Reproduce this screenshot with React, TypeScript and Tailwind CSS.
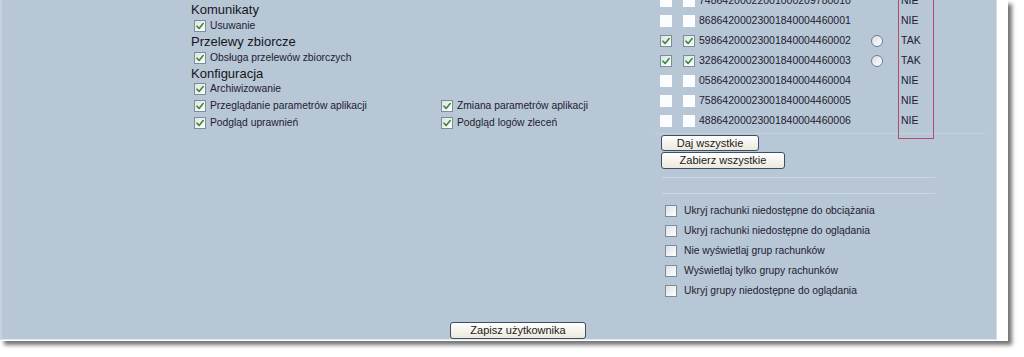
import React from 'react';

const Tick = () => (
  <svg width="10" height="10" viewBox="0 0 10 10" fill="none">
    <path d="M2 5.2L4.1 7.4L8.2 2.6" stroke="#2f8f2f" strokeWidth="1.6" strokeLinecap="round" strokeLinejoin="round" />
  </svg>
);

const Box: React.FC<{ checked?: boolean; bare?: boolean }> = ({ checked, bare }) => (
  <span
    className={`flex h-[12px] w-[12px] shrink-0 items-center justify-center ${
      bare ? 'bg-[#fbfcfd]' : 'border border-[#7c8c9b] bg-linear-to-br from-[#dde2e7] to-white'
    }`}
  >
    {checked && <Tick />}
  </span>
);

const Radio = () => (
  <span className="block h-[12px] w-[12px] rounded-full border border-[#6f7f8e] bg-linear-to-br from-[#d9dee3] to-white" />
);

const Btn: React.FC<{ label: string; w: string; h?: string }> = ({ label, w, h = 'h-[16px]' }) => (
  <button
    className={`${w} ${h} flex items-center justify-center rounded-[3px] border border-[#3d4f63] bg-linear-to-b from-white to-[#ece8dc] text-[11px] leading-none text-[#1a1a1a]`}
  >
    {label}
  </button>
);

const Opt: React.FC<{ label: string; on?: boolean }> = ({ label, on = true }) => (
  <label className="flex items-center gap-[4px] text-[10.3px] text-[#1e2030]">
    <Box checked={on} />
    <span>{label}</span>
  </label>
);

const accounts = [
  { no: '74864200022001000209780010', on: false, status: 'NIE' },
  { no: '86864200023001840004460001', on: false, status: 'NIE' },
  { no: '59864200023001840004460002', on: true, status: 'TAK' },
  { no: '32864200023001840004460003', on: true, status: 'TAK' },
  { no: '05864200023001840004460004', on: false, status: 'NIE' },
  { no: '75864200023001840004460005', on: false, status: 'NIE' },
  { no: '48864200023001840004460006', on: false, status: 'NIE' },
];

const filters = [
  'Ukryj rachunki niedostępne do obciążania',
  'Ukryj rachunki niedostępne do oglądania',
  'Nie wyświetlaj grup rachunków',
  'Wyświetlaj tylko grupy rachunków',
  'Ukryj grupy niedostępne do oglądania',
];

export default function App() {
  return (
    <div className="h-[357px] w-[1024px] overflow-hidden bg-white font-['Liberation_Sans',Arial,sans-serif]">
      <div className="flex h-[341px] w-[1008px] bg-white shadow-[4px_4px_4px_rgba(0,0,0,0.55)]">
        <div className="flex h-[340px] w-[997px] flex-col border-l-2 border-r border-b border-l-[#c6d2dc] border-r-[#d3dde6] border-b-[#dfe6ec] bg-[#b7c7d5]">
          <div className="flex">
            {/* permissions */}
            <div className="w-[653px] pl-[189px] pt-[2px]">
              <div className="h-4 text-[13px] leading-4 text-[#151520]">Komunikaty</div>
              <div className="flex h-4 items-center pl-[3px]">
                <Opt label="Usuwanie" />
              </div>
              <div className="h-4 text-[13px] leading-4 text-[#151520]">Przelewy zbiorcze</div>
              <div className="flex h-4 items-center pl-[3px]">
                <Opt label="Obsługa przelewów zbiorczych" />
              </div>
              <div className="h-[15px] text-[13px] leading-[15px] text-[#151520]">Konfiguracja</div>
              <div className="flex h-4 items-center pl-[3px]">
                <Opt label="Archiwizowanie" />
              </div>
              <div className="grid grid-cols-[247px_auto] pl-[3px]">
                <div className="flex h-[17px] items-center">
                  <Opt label="Przeglądanie parametrów aplikacji" />
                </div>
                <div className="flex h-[17px] items-center">
                  <Opt label="Zmiana parametrów aplikacji" />
                </div>
                <div className="flex h-[17px] items-center">
                  <Opt label="Podgląd uprawnień" />
                </div>
                <div className="flex h-[17px] items-center">
                  <Opt label="Podgląd logów zleceń" />
                </div>
              </div>
            </div>

            {/* accounts */}
            <div className="relative w-[330px]">
              <div className="mt-[-9px] pl-[5px]">
                {accounts.map((a) => (
                  <div key={a.no} className="grid h-5 grid-cols-[23px_16px_172px_30px_auto] items-center text-[10.5px] text-[#1e2030]">
                    <Box checked={a.on} bare={!a.on} />
                    <Box checked={a.on} bare={!a.on} />
                    <span>{a.no}</span>
                    <span>{a.on && <Radio />}</span>
                    <span>{a.status}</span>
                  </div>
                ))}
              </div>
              <div className="pointer-events-none absolute left-[243px] top-[-10px] h-[149px] w-[36px] border-x border-b border-[#b34d6e]" />

              <div className="mt-[2px] h-px w-[330px] bg-[#c3d1dd]" />
              <div className="mt-px flex flex-col gap-px pl-[6px]">
                <Btn label="Daj wszystkie" w="w-[98px]" />
                <Btn label="Zabierz wszystkie" w="w-[124px]" h="h-[17px]" />
              </div>
              <div className="ml-[7px] mt-[8px] h-px w-[273px] bg-[#ccd7e1]" />
              <div className="ml-[7px] mt-[15px] h-px w-[273px] bg-[#ccd7e1]" />
              <div className="mt-[7px] pl-[10px]">
                {filters.map((f) => (
                  <div key={f} className="flex h-5 items-center">
                    <label className="flex items-center gap-[7px] text-[10.3px] text-[#1e2030]">
                      <Box />
                      <span>{f}</span>
                    </label>
                  </div>
                ))}
              </div>
            </div>
          </div>

          <div className="pl-[448px] pt-[21px]">
            <Btn label="Zapisz użytkownika" w="w-[136px]" h="h-[17px]" />
          </div>
        </div>
      </div>
    </div>
  );
}
